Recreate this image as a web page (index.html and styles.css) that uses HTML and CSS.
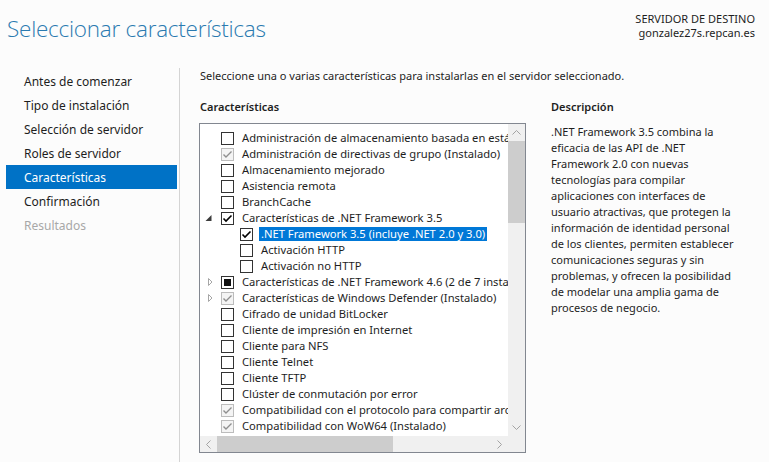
FILE: index.html
```html
<!DOCTYPE html>
<html lang="es">
<head>
<meta charset="utf-8">
<title>Seleccionar características</title>
<link rel="stylesheet" href="styles.css">
</head>
<body>
<div class="page">
  <header class="top">
    <h1 class="title">Seleccionar características</h1>
    <div class="dest">
      <div>SERVIDOR DE DESTINO</div>
      <div>gonzalez27s.repcan.es</div>
    </div>
  </header>
  <div class="main">
    <nav class="steps">
      <div class="step">Antes de comenzar</div>
      <div class="step">Tipo de instalación</div>
      <div class="step">Selección de servidor</div>
      <div class="step">Roles de servidor</div>
      <div class="step active">Características</div>
      <div class="step">Confirmación</div>
      <div class="step disabled">Resultados</div>
    </nav>
    <main class="content">
      <p class="intro">Seleccione una o varias características para instalarlas en el servidor seleccionado.</p>
      <div class="columns">
        <section class="features">
          <h2 class="col-title">Características</h2>
          <div class="tree-box">
            <div class="tree-view">
              <div class="row"><span class="exp"></span><span class="cb"></span><span class="label">Administración de almacenamiento basada en estándares</span></div>
              <div class="row"><span class="exp"></span><span class="cb dis"><svg width="11" height="11" viewBox="0 0 11 11"><polyline points="1.5,5.5 4,8 9.5,2.5"/></svg></span><span class="label">Administración de directivas de grupo (Instalado)</span></div>
              <div class="row"><span class="exp"></span><span class="cb"></span><span class="label">Almacenamiento mejorado</span></div>
              <div class="row"><span class="exp"></span><span class="cb"></span><span class="label">Asistencia remota</span></div>
              <div class="row"><span class="exp"></span><span class="cb"></span><span class="label">BranchCache</span></div>
              <div class="row"><span class="exp"><svg class="tri-open" width="8" height="8" viewBox="0 0 8 8"><polygon points="6.5,1 6.5,7 0.5,7"/></svg></span><span class="cb on"><svg width="11" height="11" viewBox="0 0 11 11"><polyline points="1.5,5.5 4,8 9.5,2.5"/></svg></span><span class="label">Características de .NET Framework 3.5</span></div>
              <div class="row l1"><span class="exp"></span><span class="cb on"><svg width="11" height="11" viewBox="0 0 11 11"><polyline points="1.5,5.5 4,8 9.5,2.5"/></svg></span><span class="label sel">.NET Framework 3.5 (incluye .NET 2.0 y 3.0)</span></div>
              <div class="row l1"><span class="exp"></span><span class="cb"></span><span class="label">Activación HTTP</span></div>
              <div class="row l1"><span class="exp"></span><span class="cb"></span><span class="label">Activación no HTTP</span></div>
              <div class="row"><span class="exp"><svg class="tri-closed" width="8" height="10" viewBox="0 0 8 10"><polygon points="3.5,1.5 7,5 3.5,8.5"/></svg></span><span class="cb"><span class="ind"></span></span><span class="label">Características de .NET Framework 4.6 (2 de 7 instalados)</span></div>
              <div class="row"><span class="exp"><svg class="tri-closed" width="8" height="10" viewBox="0 0 8 10"><polygon points="3.5,1.5 7,5 3.5,8.5"/></svg></span><span class="cb dis"><svg width="11" height="11" viewBox="0 0 11 11"><polyline points="1.5,5.5 4,8 9.5,2.5"/></svg></span><span class="label">Características de Windows Defender (Instalado)</span></div>
              <div class="row"><span class="exp"></span><span class="cb"></span><span class="label">Cifrado de unidad BitLocker</span></div>
              <div class="row"><span class="exp"></span><span class="cb"></span><span class="label">Cliente de impresión en Internet</span></div>
              <div class="row"><span class="exp"></span><span class="cb"></span><span class="label">Cliente para NFS</span></div>
              <div class="row"><span class="exp"></span><span class="cb"></span><span class="label">Cliente Telnet</span></div>
              <div class="row"><span class="exp"></span><span class="cb"></span><span class="label">Cliente TFTP</span></div>
              <div class="row"><span class="exp"></span><span class="cb"></span><span class="label">Clúster de conmutación por error</span></div>
              <div class="row"><span class="exp"></span><span class="cb dis"><svg width="11" height="11" viewBox="0 0 11 11"><polyline points="1.5,5.5 4,8 9.5,2.5"/></svg></span><span class="label">Compatibilidad con el protocolo para compartir archivos SMB 1.0/CIFS</span></div>
              <div class="row"><span class="exp"></span><span class="cb dis"><svg width="11" height="11" viewBox="0 0 11 11"><polyline points="1.5,5.5 4,8 9.5,2.5"/></svg></span><span class="label">Compatibilidad con WoW64 (Instalado)</span></div>
            </div>
            <div class="vscroll">
              <span class="arrow"><svg width="9" height="5" viewBox="0 0 9 5"><polyline points="0.5,4.5 4.5,0.5 8.5,4.5"/></svg></span>
              <span class="vthumb"></span>
              <span class="arrow end"><svg width="9" height="5" viewBox="0 0 9 5"><polyline points="0.5,0.5 4.5,4.5 8.5,0.5"/></svg></span>
            </div>
            <div class="hscroll">
              <span class="arrow"><svg width="5" height="9" viewBox="0 0 5 9"><polyline points="4.5,0.5 0.5,4.5 4.5,8.5"/></svg></span>
              <span class="hthumb"></span>
              <span class="arrow end"><svg width="5" height="9" viewBox="0 0 5 9"><polyline points="0.5,0.5 4.5,4.5 0.5,8.5"/></svg></span>
            </div>
            <div class="corner"></div>
          </div>
        </section>
        <section class="desc">
          <h2 class="col-title">Descripción</h2>
          <p class="desc-text">.NET Framework 3.5 combina la<br>eficacia de las API de .NET<br>Framework 2.0 con nuevas<br>tecnologías para compilar<br>aplicaciones con interfaces de<br>usuario atractivas, que protegen la<br>información de identidad personal<br>de los clientes, permiten establecer<br>comunicaciones seguras y sin<br>problemas, y ofrecen la posibilidad<br>de modelar una amplia gama de<br>procesos de negocio.</p>
        </section>
      </div>
    </main>
  </div>
</div>
</body>
</html>
```

FILE: styles.css
```css
html, body {
  margin: 0;
  padding: 0;
}
body {
  background: #fcfcfc;
  font-family: "Noto Sans", "Open Sans", sans-serif;
  font-size: 11px;
  color: #1e1e1e;
}
.page {
  width: 769px;
  height: 462px;
  display: flex;
  flex-direction: column;
  overflow: hidden;
}
.top {
  height: 68px;
  flex: none;
  display: flex;
  justify-content: space-between;
  align-items: flex-start;
}
.title {
  margin: 0;
  padding: 14px 0 0 7px;
  font-family: "Open Sans", sans-serif;
  font-weight: 300;
  font-size: 22.5px;
  line-height: 29px;
  color: #2a7ab0;
  letter-spacing: -0.25px;
}
.dest {
  padding: 12px 14px 0 0;
  text-align: right;
  font-size: 11px;
  line-height: 14px;
  color: #1e1e1e;
}
.main {
  flex: 1;
  display: flex;
}
.steps {
  width: 179px;
  flex: none;
  border-right: 1px solid #d4d4d4;
  padding-top: 1px;
}
.step {
  height: 24px;
  line-height: 22px;
  padding-top: 2px;
  margin-left: 6px;
  width: 171px;
  padding-left: 18px;
  box-sizing: border-box;
  font-size: 12px;
  color: #1e1e1e;
}
.step.active {
  background: #0072c6;
  color: #fff;
}
.step.disabled {
  color: #a8a8a8;
}
.content {
  flex: 1;
  padding-left: 19px;
}
.intro {
  margin: 0;
  padding-left: 1px;
  line-height: 16px;
}
.columns {
  display: flex;
  gap: 24px;
  margin-top: 14px;
}
.col-title {
  margin: 0 0 9px;
  padding-left: 1px;
  font-size: 11px;
  font-weight: 600;
  line-height: 17px;
}
.features {
  width: 327px;
  flex: none;
}
.tree-box {
  width: 327px;
  height: 330px;
  margin-top: -1px;
  box-sizing: border-box;
  border: 1px solid #828790;
  background: #fff;
  display: grid;
  grid-template-columns: 1fr 17px;
  grid-template-rows: 1fr 16px;
}
.tree-view {
  overflow: hidden;
  padding-top: 6px;
  font-size: 11.2px;
}
.row {
  height: 16px;
  display: flex;
  align-items: center;
  white-space: nowrap;
}
.exp {
  flex: none;
  width: 21px;
  height: 16px;
  display: flex;
  align-items: center;
  padding-left: 5px;
  box-sizing: border-box;
}
.l1 .exp {
  width: 40px;
}
.tri-open polygon {
  fill: #3c3c3c;
}
.tri-closed polygon {
  fill: none;
  stroke: #a6a6a6;
  stroke-width: 1;
}
.cb {
  flex: none;
  width: 13px;
  height: 13px;
  box-sizing: border-box;
  border: 1px solid #333;
  background: #fff;
  display: flex;
  align-items: center;
  justify-content: center;
}
.cb svg polyline {
  fill: none;
  stroke: #000;
  stroke-width: 1.6;
}
.cb.dis {
  border-color: #bcbcbc;
  background: #f4f4f4;
}
.cb.dis svg polyline {
  stroke: #8f8f8f;
  stroke-width: 1.4;
}
.ind {
  width: 7px;
  height: 7px;
  background: #111;
}
.label {
  margin-left: 6px;
  padding: 0 2px;
  line-height: 14px;
  color: #1e1e1e;
}
.label.sel {
  background: #0078d7;
  color: #fff;
}
.vscroll {
  background: #f0f0f0;
  display: flex;
  flex-direction: column;
}
.hscroll {
  background: #f0f0f0;
  display: flex;
}
.arrow {
  flex: none;
  width: 17px;
  height: 17px;
  display: flex;
  align-items: center;
  justify-content: center;
}
.hscroll .arrow {
  height: 16px;
}
.arrow.end {
  margin-top: auto;
}
.hscroll .arrow.end {
  margin-top: 0;
  margin-left: auto;
}
.arrow polyline {
  fill: none;
  stroke: #a3a3a3;
  stroke-width: 1;
}
.vthumb {
  height: 82px;
  background: #cdcdcd;
}
.hthumb {
  width: 176px;
  background: #cdcdcd;
}
.corner {
  background: #f0f0f0;
}
.desc {
  flex: none;
  width: 215px;
}
.desc-text {
  margin: -1px 0 0;
  padding-top: 1px;
  padding-left: 1px;
  line-height: 16px;
  white-space: nowrap;
}
```
